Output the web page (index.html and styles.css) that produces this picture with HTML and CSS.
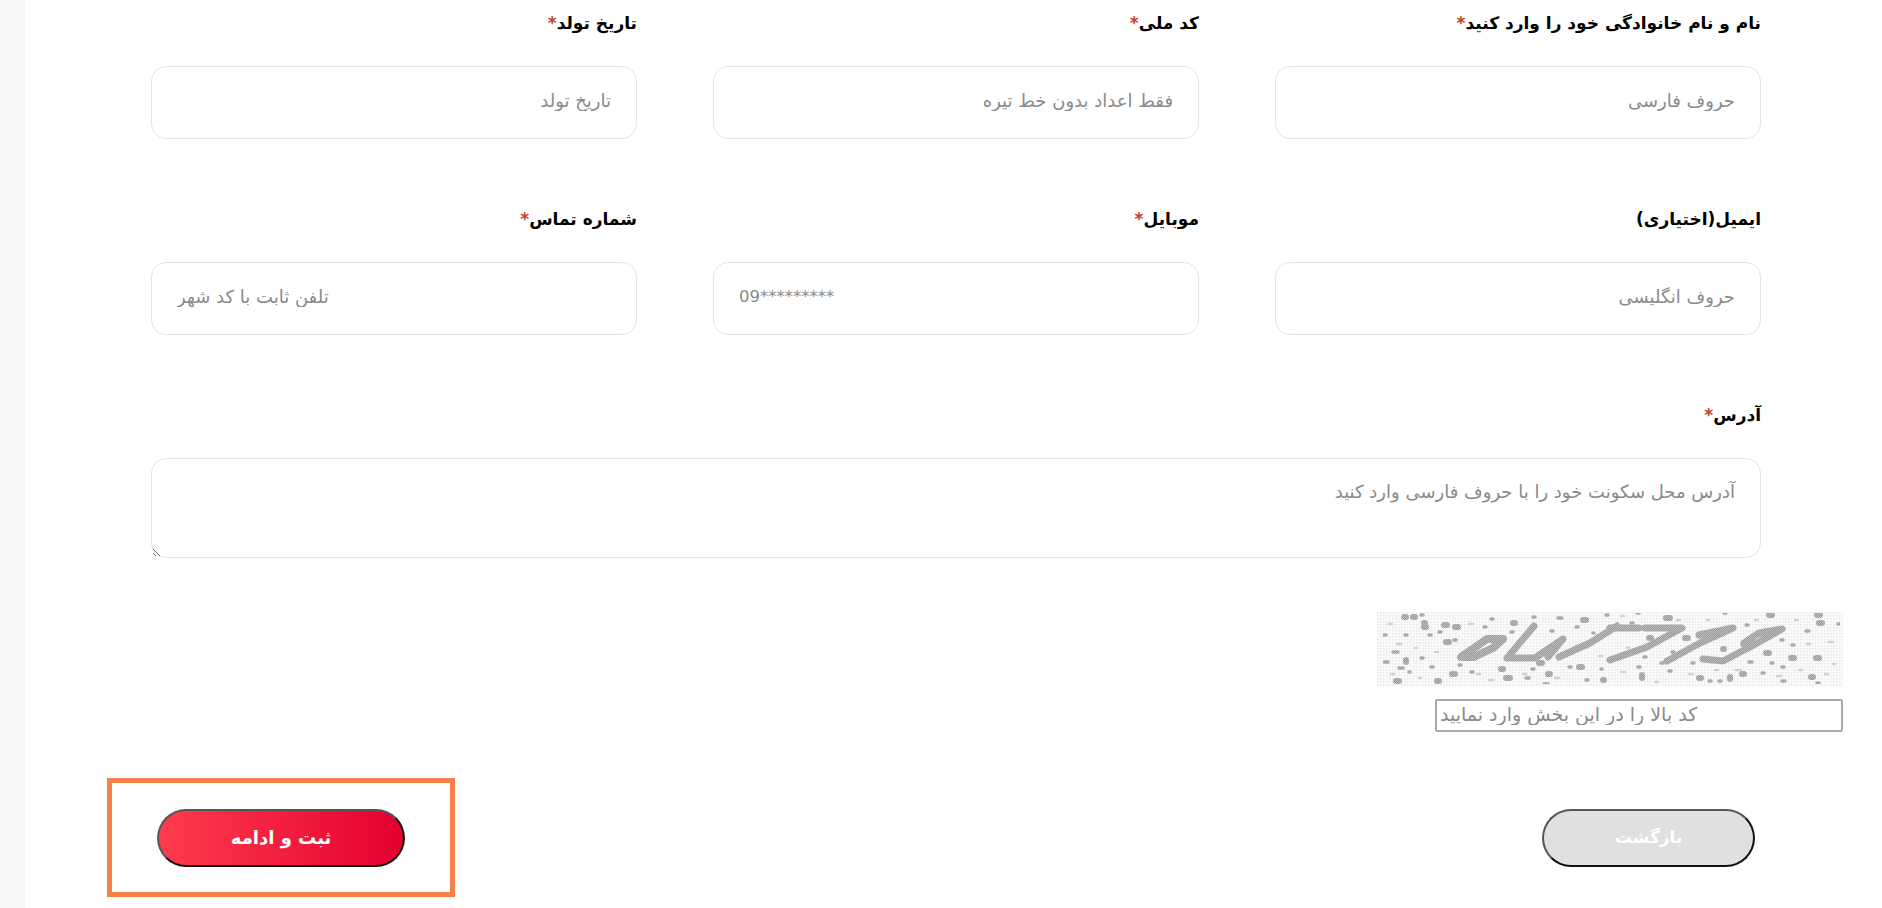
FILE: index.html
```html
<!DOCTYPE html>
<html lang="fa" dir="rtl">

<head>
    <meta charset="UTF-8">
    <meta name="viewport" content="width=device-width, initial-scale=1.0">
    <title>ثبت نام</title>
    <link rel="stylesheet" href="styles.css">
</head>

<body>
    <main class="page">
        <form class="form">
            <div class="fields">
                <div class="form-group">
                    <label for="fullname">نام و نام خانوادگی خود را وارد کنید<span class="req">*</span></label>
                    <input type="text" id="fullname" placeholder="حروف فارسی">
                </div>
                <div class="form-group">
                    <label for="national-code">کد ملی<span class="req">*</span></label>
                    <input type="text" id="national-code" placeholder="فقط اعداد بدون خط تیره">
                </div>
                <div class="form-group">
                    <label for="birth">تاریخ تولد<span class="req">*</span></label>
                    <input type="text" id="birth" placeholder="تاریخ تولد">
                </div>
                <div class="form-group">
                    <label for="email">ایمیل(اختیاری)</label>
                    <input type="text" id="email" placeholder="حروف انگلیسی">
                </div>
                <div class="form-group">
                    <label for="mobile">موبایل<span class="req">*</span></label>
                    <input type="text" id="mobile" dir="ltr" placeholder="09*********">
                </div>
                <div class="form-group">
                    <label for="phone">شماره تماس<span class="req">*</span></label>
                    <input type="text" id="phone" dir="ltr" placeholder="تلفن ثابت با کد شهر">
                </div>
                <div class="form-group form-group-wide">
                    <label for="address">آدرس<span class="req">*</span></label>
                    <textarea id="address" placeholder="آدرس محل سکونت خود را با حروف فارسی وارد کنید"></textarea>
                </div>
            </div>

            <div class="captcha">
                <svg class="captcha-img" viewBox="0 0 466 75" width="466" height="75" aria-hidden="true">
                    <defs>
                        <pattern id="bg-dots" width="3" height="3" patternUnits="userSpaceOnUse">
                            <rect width="3" height="3" fill="#fbfbfb"/>
                            <rect width="1.5" height="1.5" fill="#e8e8e8"/>
                        </pattern>
                        <pattern id="hatch" width="2" height="2" patternUnits="userSpaceOnUse">
                            <rect width="2" height="2" fill="#bcbcbc"/>
                            <rect width="1" height="1" fill="#9a9a9a"/>
                            <rect x="1" y="1" width="1" height="1" fill="#9a9a9a"/>
                        </pattern>
                        <filter id="soft" x="0" y="0" width="100%" height="100%">
                            <feGaussianBlur stdDeviation="0.7"/>
                        </filter>
                    </defs>
                    <rect width="466" height="75" fill="url(#bg-dots)"/>
                    <g fill="none" stroke-linecap="round" stroke-linejoin="round" filter="url(#soft)">
                        <!-- faint dust -->
                        <path stroke="#d2d2d2" stroke-width="2.5" d="M12 12h3M20 32h4M38 36h2M58 40h3M14 62h3M42 66h2M92 12h4M100 62h3M112 68h4M140 30h3M146 62h3M178 66h4M198 34h3M222 44h3M244 60h4M250 36h2M278 70h3M300 8h3M312 62h4M330 8h2M338 58h3M358 58h6M378 8h3M382 24h3M400 64h4M422 58h3M430 32h3M452 30h4M456 52h2M448 62h3M418 8h3M244 4h3"/>
                        <g stroke="url(#hatch)">
                            <!-- noise -->
                            <path stroke-width="6" d="M27 5h2M36 5h2M47 11h1M47 15h2M67 13h3M78 15h3M69 30h3M29 48v2M75 62h3M60 69h2M19 69h3M124 57h2M129 66h4M162 51h3M171 62h2M202 55h3M226 68h1M136 11h2M206 8h3M289 6h4M392 3h3M442 11h3M440 3h3M272 26h2M308 26h3M346 37h1M389 41h3M414 46h3M439 46h3M265 63v3M322 66h2M353 65v2M365 62h2M434 65h2"/>
                            <path stroke-width="3.5" d="M44 3h2M6 23h3M28 23h2M62 20h2M52 23h2M107 15h2M114 7h2M156 5h2M181 6h4M16 40h5M44 46h2M7 50h4M22 56h4M32 60h1M54 55h2M155 57h2M192 55h2M149 66h3M209 68h2M224 57h1M167 72h4M82 53h2M94 60h2M106 38h2M134 20h2M174 19h2M199 15h2M216 21h1M229 3h2M77 28h2M260 1h2M347 1h2M461 12h2M254 11h2M365 33h2M415 33h2M404 28h2M429 19h3M394 51h2M372 50h3M405 55h2M267 45h2M295 40h2M261 55h2M315 51h2M284 51h2M332 69h2M342 69h2M385 61h2M440 71h2M405 69h3M369 13h2M292 59h2"/>
                            <!-- distorted code -->
                            <path stroke-width="8" d="M84 45L110 27H126L116 36L97 45Z"/>
                            <path stroke-width="7" d="M130 46L157 14M130 46H158L186 27L171 45"/>
                            <path stroke-width="7" d="M182 45L213 31L240 14"/>
                            <path stroke-width="7" d="M233 16H262M233 48L270 35L305 16H268"/>
                            <path stroke-width="7" d="M290 49L323 31L356 16L322 23"/>
                            <path stroke-width="7" d="M326 47L346 49L373 35L405 17L382 21L367 31"/>
                        </g>
                    </g>
                </svg>
                <input type="text" class="captcha-input" dir="ltr" placeholder="کد بالا را در این بخش وارد نمایید">
            </div>

            <div class="actions">
                <button type="button" class="btn btn-back">بازگشت</button>
                <div class="highlight">
                    <button type="submit" class="btn btn-primary">ثبت و ادامه</button>
                </div>
            </div>
        </form>
    </main>
</body>

</html>
```

FILE: styles.css
```css
:root {
    --border: #e4e4e4;
    --placeholder: #8a8a8a;
    --req: #c8401c;
    --orange: #f8804a;
}

* {
    margin: 0;
    padding: 0;
    box-sizing: border-box;
}

html,
body {
    height: 100%;
    overflow: hidden;
}

body {
    font-family: "DejaVu Sans", sans-serif;
    background-color: #f8f8f8;
    color: #000;
}

.page {
    margin-left: 25px;
    min-height: 100%;
    height: 100%;
    background-color: #fff;
    padding: 10px 39px 0 0;
}

.fields {
    display: grid;
    grid-template-columns: repeat(3, 486px);
    column-gap: 76px;
    row-gap: 67px;
    padding-right: 82px;
}

.form-group-wide {
    grid-column: 1 / -1;
}

.form-group label {
    display: block;
    height: 24px;
    margin-bottom: 32px;
    font-size: 17px;
    font-weight: 700;
    line-height: 26px;
}

.req {
    color: var(--req);
}

.form-group input,
.form-group textarea {
    display: block;
    width: 100%;
    height: 73px;
    padding: 0 25px 4px;
    border: 1px solid var(--border);
    border-radius: 15px;
    outline: none;
    background: #fff;
    font-family: inherit;
    font-size: 18px;
}

.form-group #mobile {
    font-size: 16.5px;
}

.form-group textarea {
    height: 100px;
    padding-top: 21px;
    line-height: 24px;
}

input::placeholder,
textarea::placeholder {
    color: var(--placeholder);
    opacity: 1;
}

.captcha {
    display: flex;
    flex-direction: column;
    align-items: flex-start;
    gap: 12px;
    margin-top: 54px;
}

.captcha-img {
    display: block;
}

.captcha-input {
    width: 408px;
    height: 33px;
    padding: 0 3px 4px;
    border: 2px solid #a9a9a9;
    border-radius: 2px;
    outline: none;
    font-family: inherit;
    font-size: 19px;
}

.actions {
    display: flex;
    justify-content: space-between;
    align-items: center;
    margin-top: 46px;
    padding-right: 88px;
    padding-left: 82px;
}

.highlight {
    padding: 26px 45px 25px 45px;
    border: 5px solid var(--orange);
}

.btn {
    display: block;
    height: 58px;
    padding-bottom: 2px;
    border: 2px solid #111;
    border-top-color: #555;
    border-left-color: #555;
    border-radius: 29px;
    font-family: inherit;
    font-size: 17px;
    font-weight: 700;
    color: #fff;
    cursor: pointer;
}

.btn-back {
    width: 213px;
    background-color: #e0e0e0;
}

.btn-primary {
    width: 248px;
    font-size: 18px;
    background: linear-gradient(90deg, #ff3d4d, #e40030);
}
```
